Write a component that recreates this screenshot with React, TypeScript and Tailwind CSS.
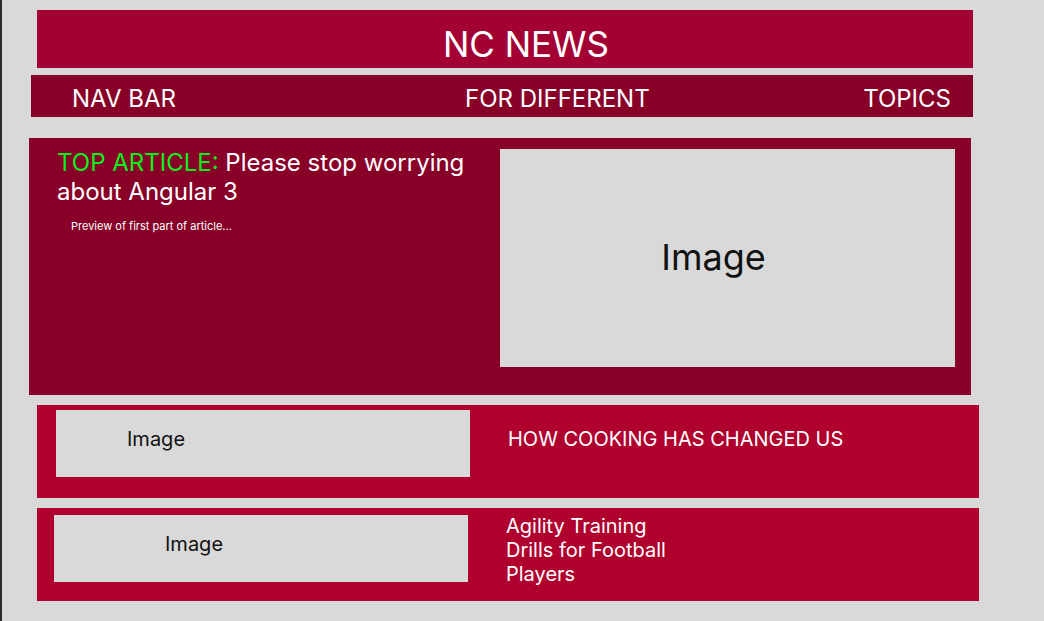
/**
 * NC News — wireframe home page: header, topic nav, top article and article cards.
 */

const font = { fontFamily: "Inter, 'Noto Sans', sans-serif" };

function ImageBox({ className, textClass, children }: { className: string; textClass: string; children?: string }) {
  return (
    <div className={`bg-[#d9d9d9] shrink-0 ${className}`}>
      <span className={`block text-[#111111] ${textClass}`}>{children ?? "Image"}</span>
    </div>
  );
}

export default function App() {
  return (
    <div className="w-[1044px] h-[621px] overflow-hidden bg-[#d9d9d9] border-l-2 border-[#2c2c2c] pt-[10px]" style={font}>
      {/* Header */}
      <header className="ml-[35px] w-[936px] h-[58px] bg-[#a30033] flex items-center justify-center">
        <h1 className="text-white text-[35px] leading-[40px] font-normal pl-[42px] pt-[9px]">NC NEWS</h1>
      </header>

      {/* Nav */}
      <nav className="mt-[7px] ml-[29px] w-[942px] h-[42px] bg-[#880027] flex items-center pl-[41px] pr-[22px] text-white text-[24px] leading-[29px] pt-[4px]">
        <span className="w-[393px]">NAV BAR</span>
        <span>FOR DIFFERENT</span>
        <span className="ml-auto">TOPICS</span>
      </nav>

      {/* Top article */}
      <section className="mt-[21px] ml-[27px] w-[942px] h-[257px] bg-[#880027] flex">
        <div className="w-[443px] pl-[28px] pt-[10px]">
          <h2 className="text-white text-[24px] leading-[29px] font-normal">
            <span className="text-[#0af020]">TOP ARTICLE: </span>
            Please stop worrying about Angular 3
          </h2>
          <p className="ml-[14px] mt-[14px] text-white text-[11px] leading-[13px]">Preview of first part of article...</p>
        </div>
        <ImageBox className="ml-[28px] mt-[11px] w-[455px] h-[218px] flex items-center justify-center pr-[28px]" textClass="text-[36px] leading-[44px] pb-[2px]" />
      </section>

      {/* Article cards */}
      <article className="mt-[10px] ml-[35px] w-[942px] h-[93px] bg-[#b0002e] flex">
        <ImageBox className="ml-[19px] mt-[5px] w-[414px] h-[67px] pl-[71px] pt-[17px]" textClass="text-[20px] leading-[24px]" />
        <h3 className="ml-[38px] pt-[22px] text-white text-[20px] leading-[24px] font-normal">HOW COOKING HAS CHANGED US</h3>
      </article>

      <article className="mt-[10px] ml-[35px] w-[942px] h-[93px] bg-[#b0002e] flex">
        <ImageBox className="ml-[17px] mt-[7px] w-[414px] h-[67px] pl-[111px] pt-[17px]" textClass="text-[20px] leading-[24px]" />
        <h3 className="ml-[38px] pt-[6px] w-[180px] text-white text-[20px] leading-[24px] font-normal">Agility Training Drills for Football Players</h3>
      </article>
    </div>
  );
}
